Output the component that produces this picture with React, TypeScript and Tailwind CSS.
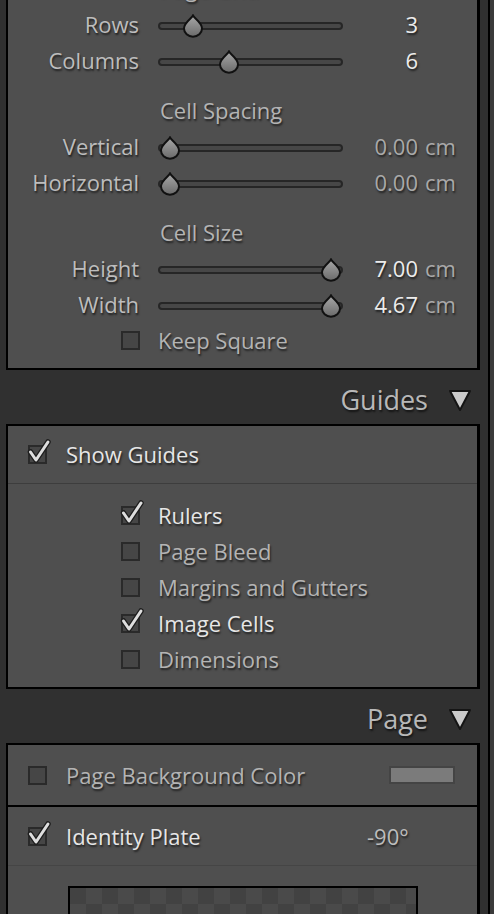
import React from "react";

const shadow = "[text-shadow:1px_2px_2px_rgba(0,0,0,0.6)]";

function Thumb({ left }: { left: number }) {
  return (
    <svg
      width="24"
      height="24"
      viewBox="0 0 24 24"
      className="absolute top-[-10px]"
      style={{ left }}
    >
      <defs>
        <linearGradient id="tg" x1="0" y1="0" x2="0" y2="1">
          <stop offset="0" stopColor="#a8a8a8" />
          <stop offset="1" stopColor="#6a6a6a" />
        </linearGradient>
      </defs>
      <path
        d="M12 1.5 C13.5 4.5 21 8.5 21 14.5 A9 8.2 0 0 1 3 14.5 C3 8.5 10.5 4.5 12 1.5 Z"
        fill="url(#tg)"
        stroke="#111"
        strokeWidth="2"
      />
    </svg>
  );
}

function SliderRow({
  label,
  thumb,
  value,
  unit,
  bright,
}: {
  label: string;
  thumb: number;
  value: string;
  unit?: string;
  bright: boolean;
}) {
  return (
    <div className="flex h-[36px] shrink-0 items-center">
      <div className={`w-[131px] text-right text-[22px] text-[#bdbdbd] ${shadow}`}>{label}</div>
      <div className="relative ml-[19px] mt-[4px] h-[8px] w-[185px] rounded-full border-2 border-[#262626] bg-[#474747]">
        <Thumb left={thumb} />
      </div>
      <div
        className={`w-[75px] text-right text-[22px] ${shadow} ${
          bright ? "text-[#ececec]" : "text-[#a9a9a9]"
        }`}
      >
        {value}
      </div>
      {unit && <div className={`ml-[7px] text-[22px] text-[#a9a9a9] ${shadow}`}>{unit}</div>}
    </div>
  );
}

function Heading({ text, extra = true }: { text: string; extra?: boolean }) {
  return (
    <div className={`flex h-[36px] shrink-0 items-center ${extra ? "mt-[14px]" : ""}`}>
      <div className={`ml-[152px] text-[22px] text-[#b4b4b4] ${shadow}`}>{text}</div>
    </div>
  );
}

function Box({ checked }: { checked: boolean }) {
  return (
    <div className="relative h-[19px] w-[19px] shrink-0 border-2 border-[#2a2a2a] bg-[#464646]">
      {checked && (
        <svg
          width="24"
          height="24"
          viewBox="0 0 24 24"
          className="absolute left-[-2px] top-[-7px] overflow-visible"
        >
          <polyline
            points="2.5,12 8,20 20,2"
            fill="none"
            stroke="#1e1e1e"
            strokeWidth="5.5"
            strokeLinecap="round"
            strokeLinejoin="round"
          />
          <polyline
            points="2.5,12 8,20 20,2"
            fill="none"
            stroke="#dedede"
            strokeWidth="3"
            strokeLinecap="round"
            strokeLinejoin="round"
          />
        </svg>
      )}
    </div>
  );
}

function SubCheck({ label, checked }: { label: string; checked: boolean }) {
  return (
    <div className="flex h-[36px] shrink-0 items-center pl-[113px]">
      <Box checked={checked} />
      <div
        className={`ml-[18px] text-[22px] ${shadow} ${
          checked ? "text-[#e6e6e6]" : "text-[#b4b4b4]"
        }`}
      >
        {label}
      </div>
    </div>
  );
}

function SectionHeader({ title }: { title: string }) {
  return (
    <div className="flex h-[54px] shrink-0 items-center justify-end pt-[6px]">
      <div className={`text-[27px] text-[#b8b8b8] ${shadow}`}>{title}</div>
      <svg width="24" height="24" viewBox="0 0 24 24" className="ml-[20px] mr-[16px]">
        <polygon
          points="2,3 22,3 12,22"
          fill="#cbcbcb"
          stroke="#151515"
          strokeWidth="2"
          strokeLinejoin="round"
        />
      </svg>
    </div>
  );
}

export default function App() {
  return (
    <div
      className="flex h-[914px] w-[494px] overflow-hidden bg-[#303030]"
      style={{ fontFamily: '"Open Sans", "Liberation Sans", sans-serif' }}
    >
      <div className="flex w-[488px] shrink-0 flex-col">
        {/* Panel 1 */}
        <div className="ml-[6px] mt-[-32px] w-[474px] shrink-0 border-2 border-r-[3px] border-black bg-[#4f4f4f] pb-[10px]">
          <Heading text="Page Grid" extra={false} />
          <SliderRow label="Rows" thumb={21} value="3" bright />
          <SliderRow label="Columns" thumb={57} value="6" bright />
          <Heading text="Cell Spacing" />
          <SliderRow label="Vertical" thumb={-2} value="0.00" unit="cm" bright={false} />
          <SliderRow label="Horizontal" thumb={-2} value="0.00" unit="cm" bright={false} />
          <Heading text="Cell Size" />
          <SliderRow label="Height" thumb={159} value="7.00" unit="cm" bright />
          <SliderRow label="Width" thumb={159} value="4.67" unit="cm" bright />
          <SubCheck label="Keep Square" checked={false} />
        </div>

        <SectionHeader title="Guides" />

        {/* Panel 2 */}
        <div className="ml-[6px] w-[474px] shrink-0 border-2 border-r-[3px] border-black bg-[#4f4f4f]">
          <div className="flex h-[58px] items-center border-b border-[#3d3d3d] pl-[20px]">
            <Box checked />
            <div className={`ml-[19px] text-[22px] text-[#e6e6e6] ${shadow}`}>Show Guides</div>
          </div>
          <div className="pb-[10px] pt-[13px]">
            <SubCheck label="Rulers" checked />
            <SubCheck label="Page Bleed" checked={false} />
            <SubCheck label="Margins and Gutters" checked={false} />
            <SubCheck label="Image Cells" checked />
            <SubCheck label="Dimensions" checked={false} />
          </div>
        </div>

        <SectionHeader title="Page" />

        {/* Panel 3 */}
        <div className="ml-[6px] w-[474px] flex-1 border-2 border-b-0 border-r-[3px] border-black bg-[#4f4f4f]">
          <div className="flex h-[62px] items-center border-b-2 border-black pl-[20px] pr-[22px]">
            <Box checked={false} />
            <div className={`ml-[19px] flex-1 text-[22px] text-[#b4b4b4] ${shadow}`}>
              Page Background Color
            </div>
            <div className="h-[18px] w-[66px] border-2 border-[#444444] bg-[#7b7b7b]" />
          </div>
          <div className="flex h-[59px] items-center border-b border-[#454545] pl-[20px]">
            <Box checked />
            <div className={`ml-[19px] w-[301px] text-[22px] text-[#e6e6e6] ${shadow}`}>
              Identity Plate
            </div>
            <div className={`text-[22px] text-[#bdbdbd] ${shadow}`}>-90°</div>
          </div>
          <div className="pl-[60px] pt-[20px]">
            <div className="h-[60px] w-[350px] border-2 border-b-0 border-black bg-[conic-gradient(#4a4a4a_25%,#424242_0_50%,#4a4a4a_0_75%,#424242_0)] bg-[length:32px_32px]" />
          </div>
        </div>
      </div>
      <div className="w-[2px] shrink-0 bg-black" />
      <div className="flex-1 bg-[#3a3a3a]" />
    </div>
  );
}
